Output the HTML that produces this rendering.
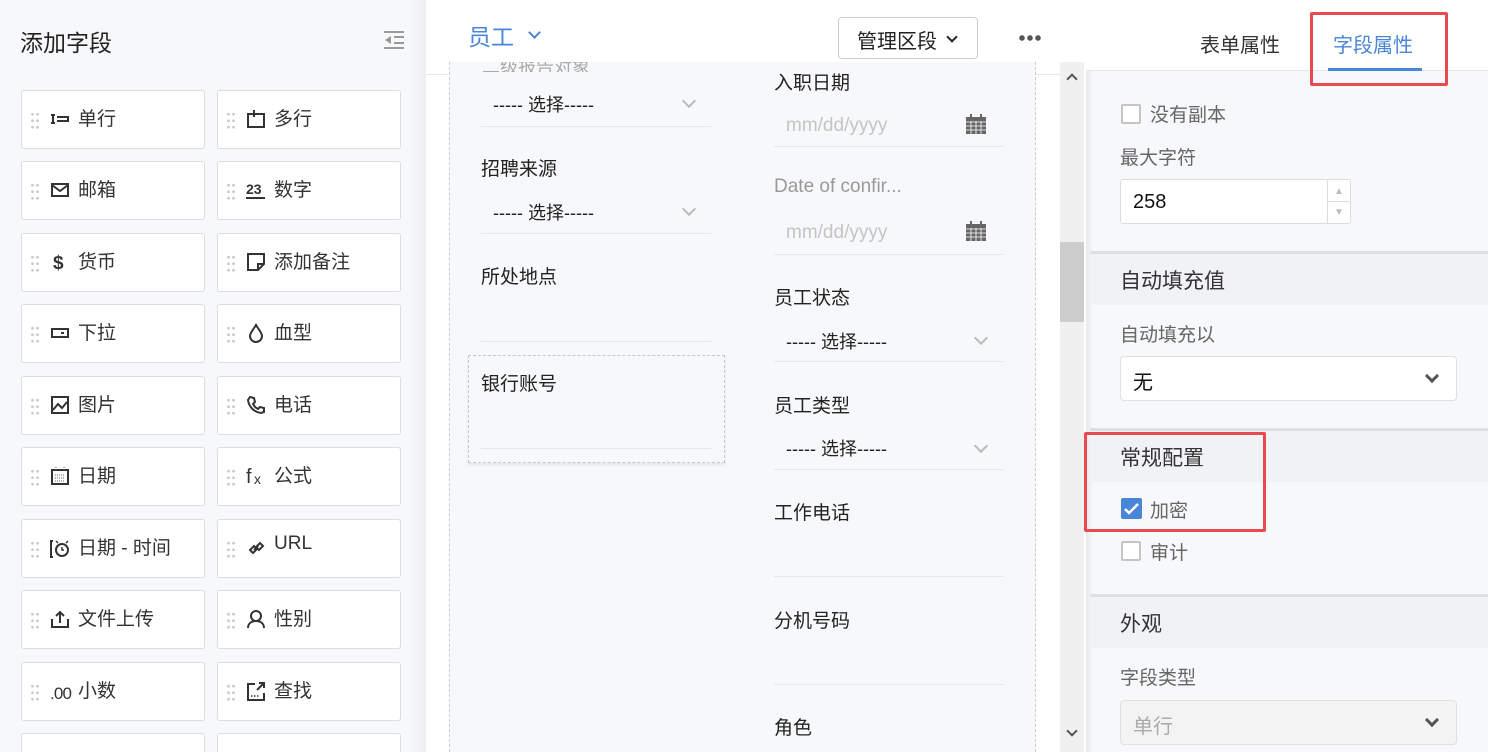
<!DOCTYPE html>
<html><head><meta charset="utf-8">
<style>
*{box-sizing:border-box;margin:0;padding:0}
html,body{width:1488px;height:752px;overflow:hidden}
body{position:relative;background:#f7f8fa;font-family:"Liberation Sans","Noto Sans CJK SC",sans-serif;color:#222}
.a{position:absolute}
.card{position:absolute;width:184px;height:59px;background:#fff;border:1px solid #dcdde0;border-radius:3px;font-size:19px;color:#333}
.card .dots{position:absolute;left:8px;top:20px;width:10px;height:20px;background-image:radial-gradient(circle,#ccc 1.3px,transparent 1.6px);background-size:5px 6.5px}
.card svg{position:absolute;left:28px;top:18px}
.card span{position:absolute;left:56px;top:13px}
.lbl{position:absolute;font-size:19px;color:#222;margin-top:-2px}
.sel{position:absolute;font-size:18px;color:#222;margin-top:-1px}
.ul{position:absolute;height:1px;background:#e6e7ea}
.chev{position:absolute;width:10px;height:10px;border-right:2px solid #bbb;border-bottom:2px solid #bbb;transform:rotate(45deg)}
.ph{position:absolute;font-size:19px;color:#c4c4c4;margin-top:1px}
.sec{position:absolute;left:1090px;width:398px;height:54px;background:#f1f2f5;border-top:3px solid #dedfe2}
.sec span{position:absolute;left:30px;top:11px;font-size:21px;color:#333}
.rl{position:absolute;font-size:19px;color:#666;margin-top:-2px}
.cb{position:absolute;width:20px;height:20px;border:2px solid #c4c4c4;background:#fff;border-radius:2px}
</style></head><body>
<!-- left -->
<div class="a" style="left:0;top:0;width:420px;height:752px;background:#f7f8fa"></div>
<div class="a" style="left:20px;top:24px;font-size:23px;color:#222">添加字段</div>
<svg class="a" style="left:384px;top:31px" width="20" height="18"><rect x="0" y="0" width="20" height="2" fill="#999"/><rect x="0" y="16" width="20" height="2" fill="#999"/><path d="M1 9 L7 5 L7 13Z" fill="#999"/><rect x="10" y="5" width="10" height="2" fill="#999"/><rect x="10" y="11" width="10" height="2" fill="#999"/></svg>

<div class="card" style="left:21px;top:90px"><div class="dots"></div><svg width="20" height="20"><path d="M3 6v8M1 6h4M1 14h4M7 8h11v4H7" stroke="#333" stroke-width="2" fill="none"/></svg><span>单行</span></div>
<div class="card" style="left:217px;top:90px"><div class="dots"></div><svg width="20" height="20"><path d="M2 5h16v13H2Z M8 1v7" stroke="#333" stroke-width="2" fill="none"/></svg><span>多行</span></div>
<div class="card" style="left:21px;top:161px"><div class="dots"></div><svg width="20" height="20"><path d="M2 4h16v12H2Z M2 5l8 6 8-6" stroke="#333" stroke-width="2" fill="none"/></svg><span>邮箱</span></div>
<div class="card" style="left:217px;top:161px"><div class="dots"></div><svg width="20" height="20"><text x="0" y="14" font-size="14" font-weight="bold" fill="#333" font-family="Liberation Sans">23</text><rect x="0" y="17" width="19" height="2" fill="#333"/></svg><span>数字</span></div>
<div class="card" style="left:21px;top:233px"><div class="dots"></div><svg width="20" height="20"><text x="3" y="17" font-size="19" font-weight="bold" fill="#333" font-family="Liberation Sans">$</text></svg><span>货币</span></div>
<div class="card" style="left:217px;top:233px"><div class="dots"></div><svg width="20" height="20"><path d="M2 2h16v10l-6 6H2Z M12 18v-6h6" stroke="#333" stroke-width="2" fill="none"/></svg><span>添加备注</span></div>
<div class="card" style="left:21px;top:304px"><div class="dots"></div><svg width="20" height="20"><path d="M2 6h16v8H2Z" stroke="#333" stroke-width="2" fill="none"/><rect x="11" y="9" width="3" height="2" fill="#333"/></svg><span>下拉</span></div>
<div class="card" style="left:217px;top:304px"><div class="dots"></div><svg width="20" height="20"><path d="M10 2C7 7 4 10 4 13a6 6 0 0 0 12 0c0-3-3-6-6-11Z" stroke="#333" stroke-width="2" fill="none"/></svg><span>血型</span></div>
<div class="card" style="left:21px;top:376px"><div class="dots"></div><svg width="20" height="20"><path d="M2 2h16v16H2Z M3 15l5-6 4 4 5-6" stroke="#333" stroke-width="2" fill="none"/></svg><span>图片</span></div>
<div class="card" style="left:217px;top:376px"><div class="dots"></div><svg width="20" height="20"><path d="M4 2l4 1 1 4-2 2c1 2 3 4 5 5l2-2 4 1 0 4-3 1C8 17 3 12 2 5Z" stroke="#333" stroke-width="2" fill="none"/></svg><span>电话</span></div>
<div class="card" style="left:21px;top:447px"><div class="dots"></div><svg width="20" height="20"><path d="M2 4h16v14H2Z" stroke="#333" stroke-width="2" fill="none"/><path d="M6 1v4M14 1v4M5 9h10M5 12h10M5 15h10" stroke="#666" stroke-width="1" stroke-dasharray="1 1"/></svg><span>日期</span></div>
<div class="card" style="left:217px;top:447px"><div class="dots"></div><svg width="22" height="20"><text x="0" y="17" font-size="20" fill="#333" font-family="Liberation Sans">f</text><text x="8" y="18" font-size="14" fill="#333" font-family="Liberation Sans">x</text></svg><span>公式</span></div>
<div class="card" style="left:21px;top:519px"><div class="dots"></div><svg width="20" height="20"><path d="M3 3H1v16h2" stroke="#333" stroke-width="2" fill="none"/><circle cx="12" cy="12" r="6" stroke="#333" stroke-width="2" fill="none"/><path d="M12 9v3h2M6 3l2 2M18 3l-2 2" stroke="#333" stroke-width="1.5" fill="none"/></svg><span>日期 - 时间</span></div>
<div class="card" style="left:217px;top:519px"><div class="dots"></div><svg width="20" height="20"><path d="M4 12l4-4 3 3-4 4Z M10 9l4-4 3 3-4 4Z M8 12l4-4" stroke="#333" stroke-width="2" fill="none"/></svg><span>URL</span></div>
<div class="card" style="left:21px;top:590px"><div class="dots"></div><svg width="20" height="20"><path d="M2 10v8h16v-8 M10 14V3 M6 7l4-4 4 4" stroke="#333" stroke-width="2" fill="none"/></svg><span>文件上传</span></div>
<div class="card" style="left:217px;top:590px"><div class="dots"></div><svg width="20" height="20"><circle cx="10" cy="7" r="5" stroke="#333" stroke-width="2" fill="none"/><path d="M2 19c0-5 4-7 8-7s8 2 8 7" stroke="#333" stroke-width="2" fill="none"/></svg><span>性别</span></div>
<div class="card" style="left:21px;top:662px"><div class="dots"></div><svg width="24" height="20"><text x="0" y="18" font-size="17" fill="#333" font-family="Liberation Sans" textLength="22">.00</text></svg><span>小数</span></div>
<div class="card" style="left:217px;top:662px"><div class="dots"></div><svg width="20" height="20"><path d="M9 3H2v16h16v-7 M11 9l7-7 M13 2h5v5" stroke="#333" stroke-width="2" fill="none"/><path d="M5 15h8" stroke="#333" stroke-width="1.5" stroke-dasharray="1.5 1.5"/></svg><span>查找</span></div>
<div class="card" style="left:21px;top:733px;height:19px;border-bottom:none;border-radius:3px 3px 0 0"></div>
<div class="card" style="left:217px;top:733px;height:19px;border-bottom:none;border-radius:3px 3px 0 0"></div>
<div class="a" style="left:410px;top:0;width:16px;height:752px;background:linear-gradient(90deg,#f7f8fa,#eceef1)"></div>

<!-- middle -->
<div class="a" style="left:426px;top:0;width:660px;height:752px;background:#fff"></div>
<div class="a" style="left:426px;top:74px;width:634px;height:1px;background:#e6e7ea"></div>
<div class="a" style="left:449px;top:62px;width:587px;height:690px;background:#f7f8fa;border-left:1px dashed #ccc;border-right:1px dashed #ccc"></div>
<div class="a" style="left:468px;top:18px;font-size:23px;color:#4a86d8">员工</div>
<div class="a" style="left:530px;top:28px;width:9px;height:9px;border-right:2px solid #4a86d8;border-bottom:2px solid #4a86d8;transform:rotate(45deg)"></div>
<div class="a" style="left:838px;top:17px;width:140px;height:42px;border:1px solid #ccc;border-radius:4px;background:#fff;font-size:20px;padding:7px 0 0 18px">管理区段</div>
<div class="a" style="left:948px;top:33px;width:8px;height:8px;border-right:2px solid #222;border-bottom:2px solid #222;transform:rotate(45deg)"></div>
<div class="a" style="left:1018px;top:35px;width:24px;height:6px;background-image:radial-gradient(circle,#555 2.5px,transparent 3px);background-size:8px 6px"></div>

<div class="a" style="left:482px;top:62px;font-size:18px;color:#aaa;height:10px;overflow:hidden;line-height:10px">二级报告对象</div>
<div class="sel" style="left:493px;top:92px">----- 选择-----</div><div class="chev" style="left:684px;top:96px"></div>
<div class="ul" style="left:481px;top:126px;width:230px"></div>
<div class="lbl" style="left:481px;top:156px">招聘来源</div>
<div class="sel" style="left:493px;top:200px">----- 选择-----</div><div class="chev" style="left:684px;top:204px"></div>
<div class="ul" style="left:481px;top:233px;width:230px"></div>
<div class="lbl" style="left:481px;top:264px">所处地点</div>
<div class="ul" style="left:481px;top:341px;width:230px"></div>
<div class="a" style="left:468px;top:355px;width:257px;height:108px;border:1px dashed #c8c8c8;box-shadow:0 2px 3px rgba(0,0,0,.08)"></div>
<div class="lbl" style="left:481px;top:371px">银行账号</div>
<div class="ul" style="left:481px;top:448px;width:230px"></div>

<div class="lbl" style="left:774px;top:70px">入职日期</div>
<div class="ph" style="left:786px;top:114px">mm/dd/yyyy</div>
<svg class="a" style="left:966px;top:114px" width="20" height="20"><rect x="0" y="3" width="20" height="17" fill="#666"/><rect x="4" y="0" width="2" height="5" fill="#666"/><rect x="14" y="0" width="2" height="5" fill="#666"/><path d="M0 8h20M0 12h20M0 16h20M5 7v13M10 7v13M15 7v13" stroke="#fff" stroke-width="0.8"/></svg>
<div class="ul" style="left:774px;top:146px;width:230px"></div>
<div class="lbl" style="left:774px;top:178px;color:#999">Date of confir...</div>
<div class="ph" style="left:786px;top:221px">mm/dd/yyyy</div>
<svg class="a" style="left:966px;top:221px" width="20" height="20"><rect x="0" y="3" width="20" height="17" fill="#666"/><rect x="4" y="0" width="2" height="5" fill="#666"/><rect x="14" y="0" width="2" height="5" fill="#666"/><path d="M0 8h20M0 12h20M0 16h20M5 7v13M10 7v13M15 7v13" stroke="#fff" stroke-width="0.8"/></svg>
<div class="ul" style="left:774px;top:254px;width:230px"></div>
<div class="lbl" style="left:774px;top:285px">员工状态</div>
<div class="sel" style="left:786px;top:329px">----- 选择-----</div><div class="chev" style="left:976px;top:333px"></div>
<div class="ul" style="left:774px;top:361px;width:230px"></div>
<div class="lbl" style="left:774px;top:393px">员工类型</div>
<div class="sel" style="left:786px;top:436px">----- 选择-----</div><div class="chev" style="left:976px;top:441px"></div>
<div class="ul" style="left:774px;top:469px;width:230px"></div>
<div class="lbl" style="left:774px;top:500px">工作电话</div>
<div class="ul" style="left:774px;top:576px;width:230px"></div>
<div class="lbl" style="left:774px;top:608px">分机号码</div>
<div class="ul" style="left:774px;top:684px;width:230px"></div>
<div class="lbl" style="left:774px;top:715px">角色</div>

<div class="a" style="left:1060px;top:62px;width:24px;height:690px;background:#f0f0f0"></div>
<div class="a" style="left:1060px;top:242px;width:24px;height:80px;background:#cdcdcd"></div>
<div class="a" style="left:1068px;top:75px;width:8px;height:8px;border-left:2px solid #555;border-top:2px solid #555;transform:rotate(45deg)"></div>
<div class="a" style="left:1068px;top:727px;width:8px;height:8px;border-right:2px solid #555;border-bottom:2px solid #555;transform:rotate(45deg)"></div>

<!-- right -->
<div class="a" style="left:1086px;top:0;width:402px;height:752px;background:#f7f8fa"></div>
<div class="a" style="left:1086px;top:0;width:8px;height:752px;background:linear-gradient(90deg,#e8e9ec,#f7f8fa)"></div>
<div class="a" style="left:1086px;top:0;width:402px;height:71px;background:#fff;border-bottom:1px solid #e6e7ea"></div>
<div class="a" style="left:1200px;top:29px;font-size:20px;color:#333">表单属性</div>
<div class="a" style="left:1333px;top:29px;font-size:20px;color:#4a86d8">字段属性</div>
<div class="a" style="left:1328px;top:68px;width:94px;height:3px;background:#4a86d8"></div>
<div class="a" style="left:1310px;top:12px;width:138px;height:74px;border:3px solid #e84a4f;border-radius:2px"></div>

<div class="cb" style="left:1121px;top:104px"></div>
<div class="rl" style="left:1150px;top:102px">没有副本</div>
<div class="rl" style="left:1120px;top:145px">最大字符</div>
<div class="a" style="left:1120px;top:179px;width:231px;height:45px;background:#fff;border:1px solid #ddd;border-radius:3px"></div>
<div class="a" style="left:1327px;top:180px;width:1px;height:43px;background:#ddd"></div>
<div class="a" style="left:1328px;top:201px;width:22px;height:1px;background:#ddd"></div>
<div class="a" style="left:1334px;top:186px;font-size:10px;color:#bbb">▲</div>
<div class="a" style="left:1334px;top:207px;font-size:10px;color:#bbb">▼</div>
<div class="a" style="left:1133px;top:191px;font-size:20px;color:#111">258</div>

<div class="sec" style="top:251px"><span>自动填充值</span></div>
<div class="rl" style="left:1120px;top:322px">自动填充以</div>
<div class="a" style="left:1120px;top:356px;width:337px;height:45px;background:#fff;border:1px solid #e0e0e0;border-radius:4px"></div>
<div class="a" style="left:1133px;top:366px;font-size:20px;color:#111">无</div>
<div class="a" style="left:1427px;top:371px;width:10px;height:10px;border-right:3px solid #555;border-bottom:3px solid #555;transform:rotate(45deg)"></div>

<div class="sec" style="top:428px"><span>常规配置</span></div>
<div class="a" style="left:1121px;top:498px;width:21px;height:21px;background:#4a86d8;border-radius:2px"></div>
<svg class="a" style="left:1121px;top:498px" width="21" height="21"><path d="M4 11l4 4 9-9" stroke="#fff" stroke-width="2.5" fill="none"/></svg>
<div class="rl" style="left:1150px;top:498px">加密</div>
<div class="cb" style="left:1121px;top:541px"></div>
<div class="rl" style="left:1150px;top:540px">审计</div>
<div class="a" style="left:1084px;top:432px;width:182px;height:100px;border:3px solid #e84a4f;border-radius:2px"></div>

<div class="sec" style="top:594px"><span>外观</span></div>
<div class="rl" style="left:1120px;top:665px">字段类型</div>
<div class="a" style="left:1120px;top:700px;width:337px;height:45px;background:#f3f3f3;border:1px solid #e0e0e0;border-radius:4px"></div>
<div class="a" style="left:1133px;top:710px;font-size:20px;color:#aaa">单行</div>
<div class="a" style="left:1427px;top:715px;width:10px;height:10px;border-right:3px solid #555;border-bottom:3px solid #555;transform:rotate(45deg)"></div>
</body></html>
